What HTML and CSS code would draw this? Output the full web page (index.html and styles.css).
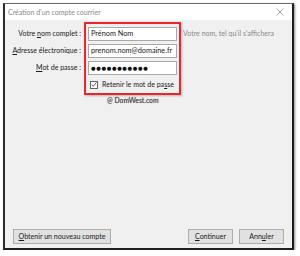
FILE: index.html
```html
<!DOCTYPE html>
<html lang="fr">
<head>
<meta charset="utf-8">
<link rel="stylesheet" href="styles.css">
</head>
<body>
<div class="window">
  <div class="titlebar">
    <span class="title">Création d'un compte courrier</span>
    <svg class="close" width="8" height="8" viewBox="0 0 8 8"><path d="M0.5 0.5 L7.5 7.5 M7.5 0.5 L0.5 7.5" stroke="#9a9a9a" stroke-width="0.9" fill="none"/></svg>
  </div>
  <div class="content">
    <div class="form">
      <div class="labels">
        <div class="label">Votre <u>n</u>om complet :</div>
        <div class="label"><u>A</u>dresse électronique :</div>
        <div class="label"><u>M</u>ot de passe :</div>
      </div>
      <div class="fields">
        <div class="input">Prénom Nom</div>
        <div class="input">prenom.nom@domaine.fr</div>
        <div class="input pw">●●●●●●●●●●●</div>
        <div class="check">
          <span class="box"><svg width="7" height="7" viewBox="0 0 7 7"><path d="M0.8 3.6 L2.7 5.5 L6.3 1.2" stroke="#333" stroke-width="0.9" fill="none"/></svg></span>
          <span>Retenir le mot de pa<u>s</u>se</span>
        </div>
      </div>
      <div class="hints">
        <div class="hint">Votre nom, tel qu'il s'affichera</div>
      </div>
    </div>
    <div class="mark">@ DomWest.com</div>
    <div class="spacer"></div>
    <div class="buttons">
      <div class="btn wide"><u>O</u>btenir un nouveau compte</div>
      <div class="grow"></div>
      <div class="btn w44"><u>C</u>ontinuer</div>
      <div class="btn w44">Ann<u>u</u>ler</div>
    </div>
  </div>
</div>
</body>
</html>
```
FILE: styles.css
```css
* { box-sizing: border-box; }
html, body { margin: 0; padding: 0; background: #ffffff; }
body { font-family: "Lato", "Noto Sans", sans-serif; font-size: 7.05px; color: #1a1a1a; }
.window {
  margin: 3px 0 0 3px;
  width: 291px;
  height: 247px;
  border: 1px solid #6a6a6a;
  border-left: 2px solid #2e2e2e;
  border-right: 2px solid #1e1e1e;
  border-bottom: 2px solid #1e1e1e;
  box-shadow: 1px 1px 2px rgba(0,0,0,0.45);
  background: #f0f0f0;
  display: flex;
  flex-direction: column;
}
.titlebar {
  height: 16px;
  background: #ffffff;
  display: flex;
  align-items: center;
  padding: 0 8px 0 3px;
  flex: none;
}
.title { color: #8a8a8a; flex: 1; }
.close { flex: none; }
.content {
  flex: 1;
  display: flex;
  flex-direction: column;
  padding: 2px 6px 4px 8px;
}
.form { display: flex; align-items: flex-start; }
.labels {
  width: 68px;
  padding-top: 5px;
  display: flex;
  flex-direction: column;
  align-items: flex-end;
  gap: 3px;
}
.label { height: 14px; line-height: 14px; white-space: nowrap; color: #1a1a1a; }
.fields {
  margin-left: 3px;
  width: 97px;
  border: 2px solid #e8262b;
  padding: 3px 2px 2px 2px;
  display: flex;
  flex-direction: column;
  gap: 3px;
  box-shadow: 1px 1px 2px rgba(0,0,0,0.25);
}
.input {
  height: 14px;
  background: #ffffff;
  border: 1px solid #a9a9a9;
  line-height: 12px;
  padding-left: 2px;
  white-space: nowrap;
  overflow: hidden;
  font-size: 7.3px;
  color: #1a1a1a;
}
.pw { font-family: "DejaVu Sans", sans-serif; font-size: 5.2px; letter-spacing: 0.7px; line-height: 12px; color: #111; }
.check {
  height: 13px;
  display: flex;
  align-items: center;
  gap: 4px;
  padding-left: 2px;
  white-space: nowrap;
}
.box {
  width: 8px; height: 8px;
  border: 1px solid #666;
  background: #fff;
  display: flex; align-items: center; justify-content: center;
}
.hints { padding-top: 5px; padding-left: 2px; }
.hint { height: 14px; line-height: 14px; color: #8a8a8a; white-space: nowrap; }
.mark {
  margin-left: 94px;
  margin-top: 1px;
  font-size: 6.8px;
  color: #3a3a3a;
  text-shadow: 0 0 1px #999;
}
.spacer { flex: 1; }
.buttons { display: flex; gap: 6px; align-items: center; padding-right: 2px; }
.grow { flex: 1; }
.btn {
  height: 15px;
  line-height: 13px;
  padding: 0 3px;
  background: #e1e1e1;
  border: 1px solid #adadad;
  white-space: nowrap;
  text-align: center;
}
.wide { width: 98px; }
.w44 { width: 45px; }
```
